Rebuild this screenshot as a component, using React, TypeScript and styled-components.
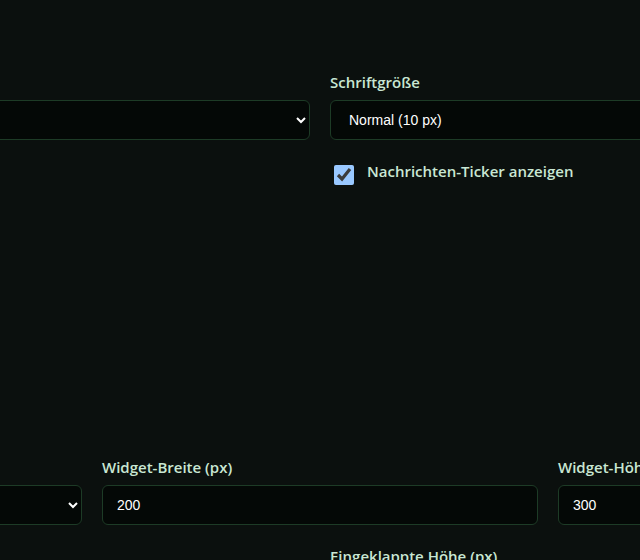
import styled, { createGlobalStyle } from "styled-components";

const GlobalStyle = createGlobalStyle`
  html, body {
    margin: 0;
    padding: 0;
    background: #0b100e;
    color-scheme: dark;
    overflow: hidden;
  }
  body {
    font-family: "Open Sans", "Noto Sans", sans-serif;
  }
`;

const Settings_Wrapper = styled.div`
  width: 1348px;
  margin-left: -354px;
  padding-top: 71px;
`;

const Section = styled.section<{ top?: number }>`
  margin-top: ${(props) => props.top ?? 0}px;
`;

const Grid = styled.div<{ cols: number }>`
  display: grid;
  grid-template-columns: repeat(${(props) => props.cols}, 1fr);
  column-gap: 20px;
  row-gap: 20px;
`;

const Field = styled.div`
  display: flex;
  flex-direction: column;
`;

const Label = styled.label`
  font-size: 15px;
  font-weight: 600;
  color: #c9e7d3;
  line-height: 22px;
  margin-bottom: 7px;
`;

const controlStyles = `
  box-sizing: border-box;
  width: 100%;
  height: 40px;
  padding: 0 14px;
  background: #040806;
  border: 1px solid #1d3b26;
  border-radius: 6px;
  color: #ffffff;
  font-family: "Liberation Sans", Arial, sans-serif;
  font-size: 14px;
  outline: none;
`;

const Select = styled.select`
  ${controlStyles}
`;

const Input = styled.input`
  ${controlStyles}
`;

const CheckRow = styled.label`
  display: flex;
  align-items: flex-start;
  gap: 10px;
  margin-top: 22px;
  font-size: 15px;
  font-weight: 600;
  color: #c9e7d3;
  input {
    width: 20px;
    height: 20px;
    margin: 3px 3px 3px 4px;
  }
  span {
    line-height: 20px;
    margin-top: -1px;
  }
`;

export default function App() {
  return (
    <>
      <GlobalStyle />
      <Settings_Wrapper>
        <Section>
          <Grid cols={2}>
            <Field>
              <Label>Farbschema</Label>
              <Select defaultValue="dark">
                <option value="dark">Dunkel (Grün)</option>
                <option value="light">Hell</option>
              </Select>
            </Field>
            <Field>
              <Label>Schriftgröße</Label>
              <Select defaultValue="10">
                <option value="9">Klein (9 px)</option>
                <option value="10">Normal (10 px)</option>
                <option value="12">Groß (12 px)</option>
              </Select>
              <CheckRow>
                <input type="checkbox" defaultChecked />
                <span>Nachrichten-Ticker anzeigen</span>
              </CheckRow>
            </Field>
          </Grid>
        </Section>

        <Section top={268}>
          <Grid cols={3}>
            <Field>
              <Label>Widget-Position</Label>
              <Select defaultValue="br">
                <option value="br">Unten rechts</option>
                <option value="bl">Unten links</option>
              </Select>
            </Field>
            <Field>
              <Label>Widget-Breite (px)</Label>
              <Input type="text" defaultValue="200" />
            </Field>
            <Field>
              <Label>Widget-Höhe (px)</Label>
              <Input type="text" defaultValue="300" />
            </Field>
          </Grid>
        </Section>

        <Section top={20}>
          <Grid cols={2}>
            <Field>
              <Label>Ausgeklappte Höhe (px)</Label>
              <Input type="text" defaultValue="300" />
            </Field>
            <Field>
              <Label>Eingeklappte Höhe (px)</Label>
              <Input type="text" defaultValue="40" />
            </Field>
          </Grid>
        </Section>
      </Settings_Wrapper>
    </>
  );
}
